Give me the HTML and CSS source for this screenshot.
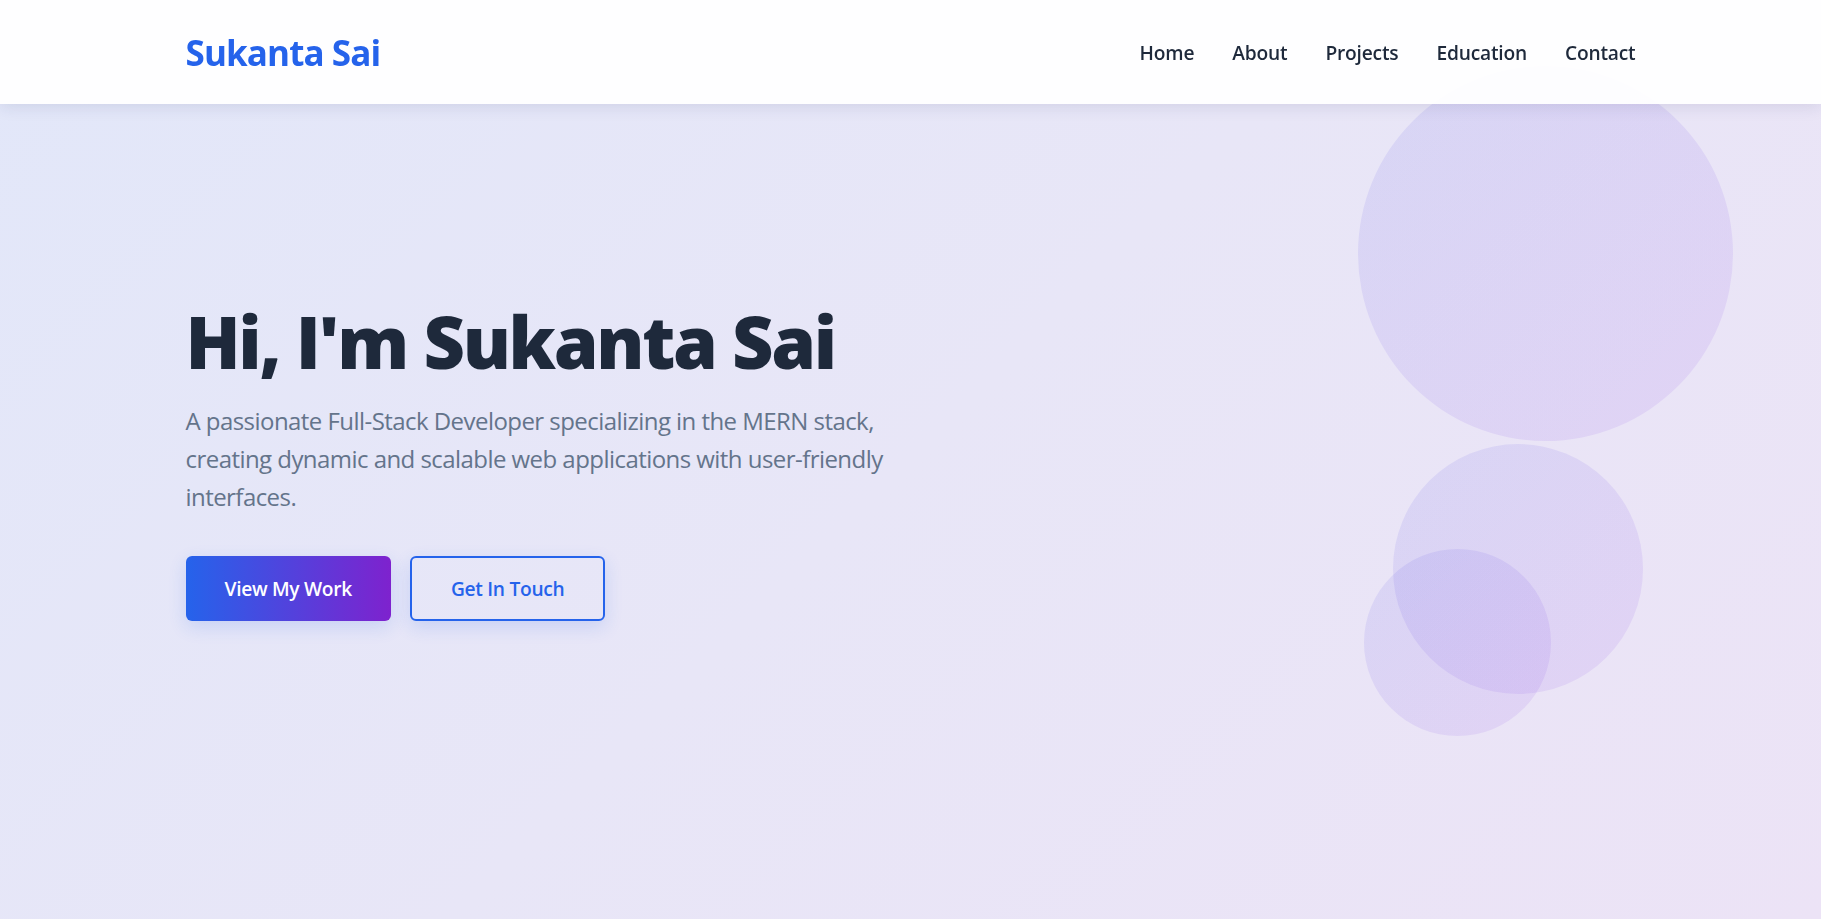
FILE: index.html
```html
<!DOCTYPE html>
<html lang="en">
<head>
<meta charset="utf-8">
<title>Sukanta Sai</title>
<link rel="stylesheet" href="styles.css">
</head>
<body>
<header class="site-header">
  <div class="container header-inner">
    <a class="logo" href="#">Sukanta Sai</a>
    <nav class="nav">
      <a href="#">Home</a>
      <a href="#">About</a>
      <a href="#">Projects</a>
      <a href="#">Education</a>
      <a href="#">Contact</a>
    </nav>
  </div>
</header>
<main>
  <section class="hero">
    <div class="shapes">
      <span class="shape shape-1"></span>
      <span class="shape shape-2"></span>
      <span class="shape shape-3"></span>
    </div>
    <div class="container hero-inner">
      <div class="hero-content">
        <h1 class="hero-title">Hi, I'm Sukanta Sai</h1>
        <p class="hero-text">A passionate Full-Stack Developer specializing in the MERN stack, creating dynamic and scalable web applications with user-friendly interfaces.</p>
        <div class="hero-actions">
          <a class="btn btn-primary" href="#">View My Work</a>
          <a class="btn btn-outline" href="#">Get In Touch</a>
        </div>
      </div>
    </div>
  </section>
</main>
</body>
</html>
```

FILE: styles.css
```css
* { box-sizing: border-box; }

html, body {
  margin: 0;
  padding: 0;
}

body {
  font-family: "Open Sans", "Noto Sans", sans-serif;
  color: #1e293b;
  background: #e6e6f7;
  overflow: hidden;
}

a { text-decoration: none; }

.container {
  max-width: 1450px;
  margin: 0 auto;
}

.site-header {
  position: fixed;
  top: 0;
  left: 0;
  right: 0;
  height: 104px;
  background: rgba(255, 255, 255, 0.95);
  box-shadow: 0 2px 16px rgba(30, 41, 90, 0.12);
  z-index: 10;
}

.header-inner {
  height: 100%;
  display: flex;
  align-items: center;
  justify-content: space-between;
}

.logo {
  font-size: 35px;
  font-weight: 700;
  color: #2563eb;
  letter-spacing: -0.9px;
}

.nav {
  display: flex;
  gap: 38px;
}

.nav a {
  font-size: 19.2px;
  font-weight: 600;
  color: #1e293b;
  letter-spacing: -0.2px;
}

.hero {
  position: relative;
  min-height: 919px;
  display: flex;
  align-items: center;
  background: linear-gradient(135deg, #e2e7f9 0%, #e8e6f7 50%, #ece3f6 100%);
}

.hero-inner {
  width: 100%;
  position: relative;
  z-index: 1;
}

.hero-content {
  max-width: 700px;
}

.hero-title {
  margin: 0 0 17px;
  font-size: 72px;
  line-height: 1.2;
  font-weight: 800;
  color: #1e293b;
  letter-spacing: -2.3px;
}

.hero-text {
  margin: 0 0 39px;
  font-size: 24px;
  line-height: 1.6;
  color: #64748b;
  letter-spacing: -0.55px;
}

.hero-actions {
  display: flex;
  gap: 19px;
}

.btn {
  display: inline-block;
  padding: 18px 36px;
  font-size: 19.2px;
  line-height: 25px;
  font-weight: 600;
  border-radius: 6px;
  border: 2px solid transparent;
  letter-spacing: -0.3px;
  box-shadow: 0 6px 18px rgba(37, 99, 235, 0.16);
}

.btn-primary {
  color: #ffffff;
  background: linear-gradient(90deg, #2563eb 0%, #7e22ce 100%);
  border: 0;
  padding: 20px 39px;
}

.btn-outline {
  color: #2563eb;
  border-color: #2563eb;
  background: transparent;
  padding: 18px 39px;
}

.shapes {
  position: absolute;
  inset: 0;
  pointer-events: none;
}

.shape {
  position: absolute;
  border-radius: 50%;
  background: linear-gradient(135deg, rgba(79, 82, 229, 0.11) 0%, rgba(140, 60, 230, 0.1) 100%);
}

.shape-1 {
  width: 375px;
  height: 375px;
  left: 1358px;
  top: 66px;
}

.shape-2 {
  width: 250px;
  height: 250px;
  left: 1393px;
  top: 444px;
}

.shape-3 {
  width: 187px;
  height: 187px;
  left: 1364px;
  top: 549px;
}
```
